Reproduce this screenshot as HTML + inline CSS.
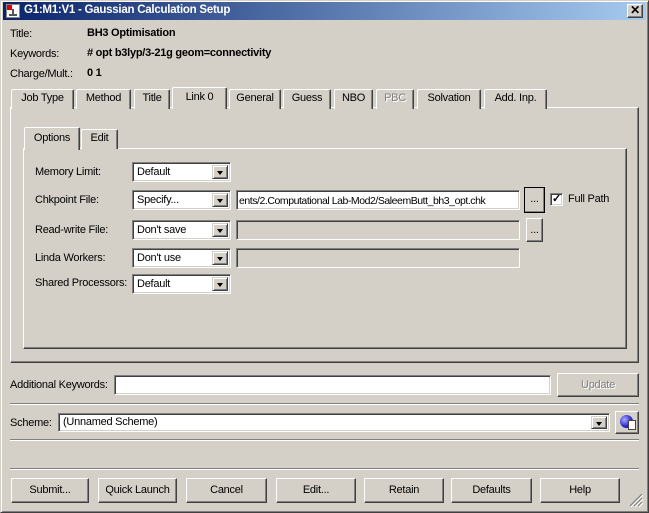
<!DOCTYPE html>
<html><head><style>
*{box-sizing:border-box;margin:0;padding:0}
body{width:649px;height:513px;background:#d4d0c8;font-family:"Liberation Sans",Arial,sans-serif;font-size:11px;letter-spacing:-0.25px;color:#000;position:relative;overflow:hidden}
.a{position:absolute;white-space:nowrap}
.raised{border:1px solid;border-color:#fff #404040 #404040 #fff;box-shadow:inset -1px -1px 0 #808080,inset 1px 1px 0 #d4d0c8;background:#d4d0c8}
.sunk{border:1px solid;border-color:#808080 #fff #fff #808080;box-shadow:inset 1px 1px 0 #404040,inset -1px -1px 0 #d4d0c8;background:#fff}
.panel{border:1px solid;border-color:#fff #404040 #404040 #fff;box-shadow:inset -1px -1px 0 #808080}
.tab{position:absolute;height:20px;border:1px solid;border-bottom:none;border-color:#fff #404040 #fff #fff;box-shadow:inset -1px 0 0 #808080;border-radius:2px 2px 0 0;text-align:center;line-height:17px;background:#d4d0c8}
.combo{position:absolute;height:20px}
.combo span{position:absolute;left:4px;top:3px}
.combo i{position:absolute;right:2px;top:2px;width:16px;height:14px;border:1px solid;border-color:#d4d0c8 #404040 #404040 #d4d0c8;box-shadow:inset 1px 1px 0 #fff,inset -1px -1px 0 #808080;background:#d4d0c8}
.combo i:after{content:"";position:absolute;left:4px;top:5px;border-left:3.5px solid transparent;border-right:3.5px solid transparent;border-top:4px solid #000}
.btn{position:absolute;height:25px;text-align:center;line-height:23px}
.sep{position:absolute;left:10px;width:629px;height:2px;border-top:1px solid #808080;border-bottom:1px solid #fff}
</style></head><body>
<div class="a" style="left:0;top:0;width:649px;height:513px;border:1px solid;border-color:#d4d0c8 #404040 #404040 #d4d0c8;box-shadow:inset 1px 1px 0 #fff,inset -1px -1px 0 #808080"></div>
<div class="a" style="left:3px;top:2px;width:643px;height:18px;background:linear-gradient(90deg,#0a246a,#a6caf0)"></div>
<div class="a" style="left:6px;top:4px;width:14px;height:14px;background:#fff;border:1px solid #888"><div style="position:absolute;left:0;top:0;width:5px;height:5px;background:#d00"></div><div style="position:absolute;left:5px;top:4px;width:2px;height:7px;background:#555"></div><div style="position:absolute;left:2px;top:9px;width:8px;height:2px;background:#555"></div></div>
<div class="a" style="left:24px;top:4px;color:#fff;font-weight:bold;font-size:11.5px">G1:M1:V1 - Gaussian Calculation Setup</div>
<div class="a raised" style="left:627px;top:4px;width:16px;height:14px;text-align:center;line-height:11px;font-weight:bold;font-size:12px">✕</div>

<div class="a" style="left:10px;top:28px">Title:</div>
<div class="a" style="left:87px;top:27px;font-weight:bold">BH3 Optimisation</div>
<div class="a" style="left:10px;top:48px">Keywords:</div>
<div class="a" style="left:87px;top:47px;font-weight:bold"># opt b3lyp/3-21g geom=connectivity</div>
<div class="a" style="left:10px;top:68px">Charge/Mult.:</div>
<div class="a" style="left:87px;top:67px;font-weight:bold">0 1</div>

<div class="a panel" style="left:10px;top:107px;width:629px;height:256px"></div>
<div class="tab" style="left:11px;top:89px;width:63px">Job Type</div>
<div class="tab" style="left:76px;top:89px;width:55px">Method</div>
<div class="tab" style="left:134px;top:89px;width:36px">Title</div>
<div class="tab" style="left:229px;top:89px;width:52px">General</div>
<div class="tab" style="left:283px;top:89px;width:48px">Guess</div>
<div class="tab" style="left:334px;top:89px;width:39px">NBO</div>
<div class="tab" style="left:376px;top:89px;width:38px;color:#808080;text-shadow:1px 1px 0 #fff">PBC</div>
<div class="tab" style="left:417px;top:89px;width:64px">Solvation</div>
<div class="tab" style="left:484px;top:89px;width:63px">Add. Inp.</div>
<div class="tab" style="left:172px;top:87px;width:55px;height:22px;z-index:2;line-height:18px">Link 0</div>

<div class="a panel" style="left:23px;top:148px;width:604px;height:201px"></div>
<div class="tab" style="left:81px;top:129px;width:37px">Edit</div>
<div class="tab" style="left:24px;top:127px;width:56px;height:23px;z-index:2;line-height:20px">Options</div>

<div class="a" style="left:35px;top:166px">Memory Limit:</div>
<div class="a" style="left:35px;top:194px">Chkpoint File:</div>
<div class="a" style="left:35px;top:224px">Read-write File:</div>
<div class="a" style="left:35px;top:252px">Linda Workers:</div>
<div class="a" style="left:35px;top:277px">Shared Processors:</div>
<div class="combo sunk" style="left:132px;top:162px;width:99px"><span>Default</span><i></i></div>
<div class="combo sunk" style="left:132px;top:190px;width:99px"><span>Specify...</span><i></i></div>
<div class="combo sunk" style="left:132px;top:220px;width:99px"><span>Don't save</span><i></i></div>
<div class="combo sunk" style="left:132px;top:248px;width:99px"><span>Don't use</span><i></i></div>
<div class="combo sunk" style="left:132px;top:274px;width:99px"><span>Default</span><i></i></div>
<div class="a sunk" style="left:236px;top:190px;width:284px;height:20px;padding:4px 2px;overflow:hidden;font-size:10.5px;letter-spacing:-0.45px">ents/2.Computational Lab-Mod2/SaleemButt_bh3_opt.chk</div>
<div class="a sunk" style="left:236px;top:220px;width:284px;height:20px;background:#d4d0c8"></div>
<div class="a sunk" style="left:236px;top:248px;width:284px;height:20px;background:#d4d0c8"></div>
<div class="btn raised" style="left:524px;top:187px;width:21px;height:26px;border-color:#000;line-height:22px">...</div>
<div class="btn raised" style="left:526px;top:218px;width:17px;height:24px;line-height:22px">...</div>
<div class="a sunk" style="left:550px;top:193px;width:13px;height:13px;font-size:11px;line-height:10px;text-align:center;font-weight:bold">✓</div>
<div class="a" style="left:568px;top:193px">Full Path</div>

<div class="a" style="left:10px;top:379px">Additional Keywords:</div>
<div class="a sunk" style="left:114px;top:375px;width:437px;height:20px"></div>
<div class="btn raised" style="left:557px;top:373px;width:82px;height:24px;color:#808080;text-shadow:1px 1px 0 #fff">Update</div>
<div class="sep" style="top:403px"></div>
<div class="a" style="left:10px;top:417px">Scheme:</div>
<div class="combo sunk" style="left:58px;top:413px;width:552px;height:19px"><span style="top:2px">(Unnamed Scheme)</span><i style="height:13px"></i></div>
<div class="a raised" style="left:615px;top:411px;width:24px;height:23px"><div style="position:absolute;left:4px;top:3px;width:13px;height:13px;border-radius:50%;background:radial-gradient(circle at 35% 35%,#aaf,#22c 60%,#006)"></div><div style="position:absolute;left:12px;top:8px;width:8px;height:10px;background:#fff;border:1px solid #444"></div></div>
<div class="sep" style="top:439px"></div>
<div class="sep" style="top:468px"></div>

<div class="btn raised" style="left:11px;top:478px;width:78px">Submit...</div>
<div class="btn raised" style="left:98px;top:478px;width:79px">Quick Launch</div>
<div class="btn raised" style="left:186px;top:478px;width:81px">Cancel</div>
<div class="btn raised" style="left:276px;top:478px;width:80px">Edit...</div>
<div class="btn raised" style="left:364px;top:478px;width:80px">Retain</div>
<div class="btn raised" style="left:451px;top:478px;width:81px">Defaults</div>
<div class="btn raised" style="left:540px;top:478px;width:80px">Help</div>
<svg class="a" style="left:628px;top:492px" width="16" height="16"><path d="M14 2L2 14M14 6L6 14M14 10L10 14" stroke="#808080" stroke-width="1.2"/><path d="M15 3L3 15M15 7L7 15M15 11L11 15" stroke="#fff" stroke-width="1"/></svg>
</body></html>
